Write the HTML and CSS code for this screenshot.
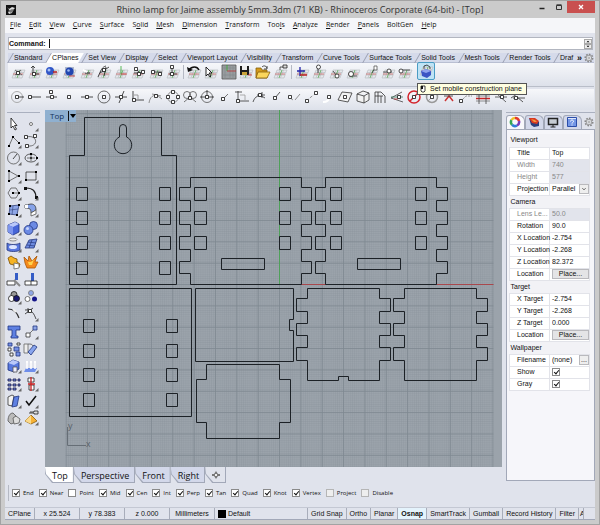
FILE: index.html
```html
<!DOCTYPE html>
<html lang="en">

<head>
  <meta charset="UTF-8">
  <meta name="viewport" content="width=device-width, initial-scale=1.0">
  <title>Rhino lamp for Jaime assembly 5mm.3dm</title>
  <link rel="stylesheet" href="styles.css">
</head>

<body>
  <!-- shared icon parts -->
  <svg class="defs" width="0" height="0">
    <symbol id="plane" viewBox="0 0 16 16">
      <path d="M5 6h10l-3 8H2z" fill="#e6e8ec" />
      <path d="M2 14l3-8M5 14l3-8M8.500 14l3-8M12 14l3-8M5 6h10M4 8.500h10M3 11h10M2 14h10" stroke="#b4b8be" stroke-width=".6" fill="none" />
      <path d="M3 10h10" stroke="#c66" />
      <path d="M7 14l3-8" stroke="#5a5" stroke-width=".8" />
    </symbol>
    <symbol id="dot" viewBox="0 0 4 4">
      <path d="M.5.5h3v3h-3z" fill="#fff" stroke="#111" />
    </symbol>
    <symbol id="gear" viewBox="0 0 10 10">
      <circle cx="5" cy="5" r="3.800" fill="none" stroke="#888" stroke-width="1.500" stroke-dasharray="1.700 1.200" />
      <circle cx="5" cy="5" r="2.800" fill="#e8eaee" stroke="#888" stroke-width=".8" />
      <circle cx="5" cy="5" r="1" fill="#fff" stroke="#888" stroke-width=".7" />
    </symbol>
    <symbol id="more" viewBox="0 0 16 16">
      <path d="M15.500 12v3.500H12z" fill="#666" />
    </symbol>
  </svg>

  <div class="window">
    <header class="titlebar">
      <svg class="logo" viewBox="0 0 10 10"><path d="M0 0h10v10H0z" fill="#111" /><path d="M1 2l2 2 3-2 3 1-2 2-1 3-3 1-1-2 2-1z" fill="#ddd" /><path d="M2 6l4-2 2 1-3 3z" fill="#777" /></svg>
      <h1>Rhino lamp for Jaime assembly 5mm.3dm (71 KB) - Rhinoceros Corporate (64-bit) - [Top]</h1>
      <div class="controls">
        <button aria-label="Minimize"><svg viewBox="0 0 10 10"><path d="M2.500 6.500h5" stroke="#222" stroke-width="1.500" /></svg></button>
        <button aria-label="Maximize"><svg viewBox="0 0 10 10"><path d="M2.500 3.500h5v4h-5zM2.500 2.800h5" fill="none" stroke="#333" /></svg></button>
        <button class="close" aria-label="Close"><svg viewBox="0 0 10 10"><path d="M3 3l4 4M7 3L3 7" stroke="#fff" stroke-width="1.300" /></svg></button>
      </div>
    </header>

    <div class="client">
      <nav class="menu">
        <a href="#"><u>F</u>ile</a>
        <a href="#"><u>E</u>dit</a>
        <a href="#"><u>V</u>iew</a>
        <a href="#"><u>C</u>urve</a>
        <a href="#"><u>S</u>urface</a>
        <a href="#">S<u>o</u>lid</a>
        <a href="#"><u>M</u>esh</a>
        <a href="#"><u>D</u>imension</a>
        <a href="#"><u>T</u>ransform</a>
        <a href="#">Too<u>l</u>s</a>
        <a href="#"><u>A</u>nalyze</a>
        <a href="#"><u>R</u>ender</a>
        <a href="#"><u>P</u>anels</a>
        <a href="#">BoltGen</a>
        <a href="#"><u>H</u>elp</a>
      </nav>

      <div class="command">
        <label for="cmd">Command:</label>
        <span class="caret"></span>
        <input id="cmd" type="text">
        <div class="spin"><button aria-label="Up"><svg viewBox="0 0 8 4"><path d="M4 1l2 2H2z" /></svg></button><button aria-label="Down"><svg viewBox="0 0 8 4"><path d="M4 3l2-2H2z" /></svg></button></div>
      </div>

      <div class="tabs">
        <button>Standard</button>
        <button class="active">CPlanes</button>
        <button>Set View</button>
        <button>Display</button>
        <button>Select</button>
        <button>Viewport Layout</button>
        <button>Visibility</button>
        <button>Transform</button>
        <button>Curve Tools</button>
        <button>Surface Tools</button>
        <button>Solid Tools</button>
        <button>Mesh Tools</button>
        <button>Render Tools</button>
        <button>Draf</button>
        <b>»</b>
        <svg class="gear"><use href="#gear" /></svg>
      </div>

      <div class="toolbar">
        <svg viewBox="0 0 16 16"><use href="#plane" /><path d="M5 6l7 5M5 11l6-5" stroke="#555" /><use href="#dot" x="6" y="7" width="4" height="4" /></svg>
        <svg viewBox="0 0 16 16"><use href="#plane" /><path d="M6 10V2M4 4l2-2 2 2M6 10h6" fill="none" stroke="#222" /><use href="#dot" x="5" y="8" width="4" height="4" /></svg>
        <svg viewBox="0 0 16 16"><use href="#plane" /><circle cx="6" cy="7" r="4" fill="#3157c8" /><circle cx="5" cy="6" r="1.500" fill="#a9c1f4" /><path d="M9 8h4" stroke="#b22" stroke-width="1.500" /></svg>
        <svg viewBox="0 0 16 16"><use href="#plane" /><path d="M4 3h9v9H4z" fill="#aeb8cc" /><circle cx="8.500" cy="7.500" r="4" fill="#2145b0" /><circle cx="7.500" cy="6.500" r="1.300" fill="#9db8f0" /><path d="M8 12h6" stroke="#b22" /></svg>
        <svg viewBox="0 0 16 16"><use href="#plane" /><path d="M6 9h5" stroke="#555" stroke-width="1.500" /><path d="M4 6l4 2" stroke="#fff" stroke-width="2" /></svg>
        <svg viewBox="0 0 16 16"><use href="#plane" /><path d="M2 13C5 6 6 3 10 2M4 9l9-6M8 12l2-9" fill="none" stroke="#222" /><use href="#dot" x="6" y="4" width="4" height="4" /></svg>
        <svg viewBox="0 0 16 16"><use href="#plane" /><path d="M8 10V2" stroke="#3a3" /><path d="M8 10h6" stroke="#c44" /></svg>
        <svg viewBox="0 0 16 16"><use href="#plane" /><path d="M4 9h7M6 5l4 4" stroke="#333" /><use href="#dot" x="4" y="3" width="4" height="4" /><use href="#dot" x="7" y="8" width="4" height="4" /><use href="#dot" x="11" y="6" width="4" height="4" /></svg>
        <svg viewBox="0 0 16 16"><use href="#plane" /><path d="M4 8h10" stroke="#333" /><use href="#dot" x="3" y="6" width="4" height="4" /><use href="#dot" x="10" y="8" width="4" height="4" /></svg>
        <svg viewBox="0 0 16 16"><use href="#plane" /><path d="M7 3v7M4 10h8" stroke="#333" /><use href="#dot" x="5" y="1" width="4" height="4" /><use href="#dot" x="5" y="8" width="4" height="4" /></svg>
        <i class="sep"></i>
        <svg viewBox="0 0 16 16"><use href="#plane" /><path d="M3 6c3-4 8-4 10 0" fill="none" stroke="#111" stroke-width="1.500" /><path d="M1 3l1 5 5-2z" fill="#111" /></svg>
        <svg viewBox="0 0 16 16"><use href="#plane" /><path d="M3 3v9l2-2 2 3 1-1-2-3h3z" fill="#fff" stroke="#111" stroke-width=".9" /></svg>
        <svg viewBox="0 0 16 16"><path d="M1 1h14v14H1z" fill="#999da0" stroke="#555" /><path d="M1 4h14M1 11h14M4 1v14M12 1v14M9 1v14" stroke="#85898d" stroke-width=".7" /><path d="M6 1v6" stroke="#3a3" /><path d="M6 7h9" stroke="#b33" /></svg>
        <svg viewBox="0 0 16 16"><use href="#plane" /><path d="M2 2h9v9H2z" fill="#1c1c1c" /><path d="M4 2h5v4H4z" fill="#eee" /><path d="M4 8h5v3H4z" fill="#caa43a" /><path d="M10 11h4" stroke="#c33" /></svg>
        <svg viewBox="0 0 16 16"><path d="M1 4h5l1 2h5v8H1z" fill="#d49a1c" stroke="#86600c" stroke-width=".8" /><path d="M3 8h12l-3 6H1z" fill="#fbd65c" stroke="#86600c" stroke-width=".8" /><path d="M7 3c2-2 4-1 5 1M12 2v3H9" fill="none" stroke="#222" /></svg>
        <svg viewBox="0 0 16 16"><use href="#plane" /><path d="M8 6V3h4" fill="none" stroke="#333" /><path d="M11 1h4v3h-4z" fill="#ddd" stroke="#222" /></svg>
        <i class="sep"></i>
        <svg viewBox="0 0 16 16"><use href="#plane" /><path d="M6 3v9M3 7h8" stroke="#22a" stroke-width="1.300" /><path d="M6 11h7" stroke="#b22" stroke-width="1.500" /></svg>
        <svg viewBox="0 0 16 16"><use href="#plane" /><path d="M7 9V4" stroke="#222" /><circle cx="7.500" cy="3" r="2" fill="#fff" stroke="#222" /></svg>
        <svg viewBox="0 0 16 16"><use href="#plane" /><path d="M5 7l4 5" stroke="#333" /><circle cx="9" cy="12" r="2" fill="#fff" stroke="#222" /></svg>
        <svg viewBox="0 0 16 16"><use href="#plane" /><path d="M4 12h8" stroke="#333" /><circle cx="6" cy="10" r="2.500" fill="#fff" stroke="#222" /></svg>
        <svg viewBox="0 0 16 16"><use href="#plane" /><path d="M9 9l3-5" stroke="#333" /><path d="M11 2h3v4h-3z" fill="#fff" stroke="#555" /></svg>
        <svg viewBox="0 0 16 16"><use href="#plane" /><path d="M3 8h9" stroke="#333" /><circle cx="9" cy="7" r="2" fill="#fff" stroke="#222" /></svg>
        <svg viewBox="0 0 16 16"><use href="#plane" /><path d="M4 6h9" stroke="#333" /><circle cx="4" cy="7" r="2" fill="#fff" stroke="#222" /></svg>
        <div class="hot">
          <button aria-label="Set mobile construction plane"><svg viewBox="0 0 16 16"><use href="#plane" y="-2" /><path d="M3 8l5-2 5 2v4l-4 3-5-2z" fill="#3b55c4" /><path d="M3 8l5-2 5 2-5 2z" fill="#8fa4ee" /><path d="M6 6V3l3-1 3 2v2" fill="none" stroke="#222" /></svg></button>
          <div class="tooltip"><svg viewBox="0 0 6 8"><path d="M1 1h4v5l-1 1H2L1 6z" fill="#fff" stroke="#111" /><path d="M1 1h2v3H1z" fill="#111" /></svg>Set mobile construction plane</div>
        </div>
      </div>

      <div class="toolbar osnap-bar">
        <svg viewBox="0 0 16 16"><circle cx="7" cy="8" r="5.500" fill="none" stroke="#999" /><path d="M8 8h6" stroke="#222" /><use href="#dot" x="5" y="6" width="4" height="4" /></svg>
        <svg viewBox="0 0 16 16"><path d="M4 8h10" stroke="#222" /><use href="#dot" x="1" y="6" width="4" height="4" /></svg>
        <svg viewBox="0 0 16 16"><path d="M2 8h11" stroke="#222" /><use href="#dot" x="6" y="6" width="4" height="4" /><use href="#dot" x="5" y="1" width="4" height="4" /></svg>
        <svg viewBox="0 0 16 16"><use href="#dot" x="6" y="6" width="4" height="4" /></svg>
        <svg viewBox="0 0 16 16"><path d="M2 8h12" stroke="#222" /><use href="#dot" x="6" y="6" width="4" height="4" /></svg>
        <svg viewBox="0 0 16 16"><circle cx="8" cy="8" r="6" fill="none" stroke="#444" /><use href="#dot" x="6" y="6" width="4" height="4" /></svg>
        <svg viewBox="0 0 16 16"><path d="M2 8h12M11 2L6 14" stroke="#222" /><use href="#dot" x="6" y="6" width="4" height="4" /></svg>
        <svg viewBox="0 0 16 16"><path d="M3 2v9h11" fill="none" stroke="#222" /><path d="M4 6h4v4" fill="none" stroke="#888" /><use href="#dot" x="2" y="9" width="4" height="4" /></svg>
        <svg viewBox="0 0 16 16"><path d="M1 14c1-6 4-9 9-7l4 3M4 5l9 2" fill="none" stroke="#777" /><use href="#dot" x="6" y="5" width="4" height="4" /></svg>
        <svg viewBox="0 0 16 16"><circle cx="8" cy="8" r="5.500" fill="none" stroke="#777" /><use href="#dot" x="6" y="1" width="4" height="4" /><use href="#dot" x="6" y="11" width="4" height="4" /><use href="#dot" x="1" y="6" width="4" height="4" /><use href="#dot" x="11" y="6" width="4" height="4" /></svg>
        <svg viewBox="0 0 16 16"><circle cx="5" cy="6" r="3.500" fill="none" stroke="#555" /><circle cx="11" cy="6" r="3.500" fill="none" stroke="#555" /><path d="M2 13l6-5 6 5" fill="none" stroke="#555" /><use href="#dot" x="6" y="7" width="4" height="4" /></svg>
        <svg viewBox="0 0 16 16"><circle cx="8" cy="8" r="5.500" fill="none" stroke="#555" /><path d="M8 1v7M1 8h14" stroke="#222" /><use href="#dot" x="6" y="6" width="4" height="4" /></svg>
        <svg viewBox="0 0 16 16"><path d="M6 10l5-5" stroke="#555" /><use href="#dot" x="4" y="8" width="4" height="4" /></svg>
        <svg viewBox="0 0 16 16"><path d="M4 2v11M1 3h7M4 12h11" stroke="#333" /><path d="M6 6h5v5" fill="none" stroke="#999" /><use href="#dot" x="2" y="10" width="4" height="4" /></svg>
        <svg viewBox="0 0 16 16"><path d="M2 13c2-6 6-8 12-4M6 6h8M11 3v6" fill="none" stroke="#333" /><use href="#dot" x="7" y="4" width="4" height="4" /></svg>
        <svg viewBox="0 0 16 16"><path d="M7 9l5-6" stroke="#333" /><use href="#dot" x="5" y="7" width="4" height="4" /></svg>
        <svg viewBox="0 0 16 16"><path d="M3 8l4 3M9 11l5-6" stroke="#777" /><use href="#dot" x="2" y="6" width="4" height="4" /></svg>
        <svg viewBox="0 0 16 16"><path d="M3 12l10-8" stroke="#777" stroke-dasharray="3 2" /><use href="#dot" x="2" y="10" width="4" height="4" /><use href="#dot" x="11" y="2" width="4" height="4" /></svg>
        <svg viewBox="0 0 16 16"><path d="M3 13c4 0 6-1 6-5" fill="none" stroke="#fff" stroke-width="2" /><use href="#dot" x="7" y="6" width="4" height="4" /></svg>
        <svg viewBox="0 0 16 16"><path d="M5 3l10 1-4 9L1 11z" fill="#f2f2f2" stroke="#333" /><use href="#dot" x="6" y="6" width="4" height="4" /></svg>
        <svg viewBox="0 0 16 16"><path d="M2 5l6-3 6 2v7l-5 3-7-2zM2 5l7 2 5-3M9 7v7" fill="#f2f2f2" stroke="#333" /></svg>
        <svg viewBox="0 0 16 16"><path d="M3 14V3h6l4 4v7M3 7h8M6 3v11M9 7v7" fill="none" stroke="#333" /></svg>
        <svg viewBox="0 0 16 16"><path d="M13 3L2 9l12 4" fill="none" stroke="#444" /><path d="M2 8h12" stroke="#3a7a5a" /><path d="M5 10h4" stroke="#c33" /><use href="#dot" x="8" y="6" width="4" height="4" /></svg>
        <svg viewBox="0 0 16 16"><circle cx="8" cy="8" r="6" fill="none" stroke="#d3232b" stroke-width="1.500" /><path d="M4 12l8-8" stroke="#d3232b" stroke-width="1.500" /><use href="#dot" x="6" y="6" width="4" height="4" /></svg>
        <svg viewBox="0 0 16 16"><circle cx="8" cy="8" r="5.500" fill="none" stroke="#999" stroke-width="1.500" /><path d="M4 12l8-8" stroke="#999" /><use href="#dot" x="6" y="6" width="4" height="4" /></svg>
        <svg viewBox="0 0 16 16"><path d="M4 12l4-5 4 5" fill="none" stroke="#c33" stroke-width="1.500" /><path d="M3 7h9" stroke="#333" /></svg>
        <svg viewBox="0 0 16 16"><path d="M3 12l5-5h6" fill="none" stroke="#777" stroke-dasharray="2 1" /><use href="#dot" x="1" y="10" width="4" height="4" /></svg>
        <svg viewBox="0 0 16 16"><path d="M1 7h14M1 12h14" stroke="#777" /><path d="M1 9.500h14" stroke="#c22" stroke-width="1.500" /><path d="M4 5v10M11 5v10" stroke="#444" /></svg>
        <svg viewBox="0 0 16 16"><path d="M2 8h12M4 5l9 8" stroke="#444" /><use href="#dot" x="7" y="6" width="4" height="4" /></svg>
        <svg viewBox="0 0 16 16"><path d="M1 9l9-6h4v3M3 9h12M7 8l6 5" fill="none" stroke="#333" /><use href="#dot" x="4" y="7" width="4" height="4" /></svg>
      </div>

      <main class="work">
        <aside class="tools">
          <svg viewBox="0 0 16 16"><path d="M5 2v10l2-2 2 4 1.500-.8-2-3.700H11z" fill="#fff" stroke="#111" /></svg>
          <svg viewBox="0 0 16 16"><circle cx="8" cy="8" r="1.500" fill="#fff" stroke="#555" /><use href="#more" /></svg>
          <svg viewBox="0 0 16 16"><path d="M3 13L7 4l6 6" fill="none" stroke="#555" /><path d="M2 12h2v2H2zM6 3h2v2H6zM12 9h2v2h-2z" /><use href="#more" /></svg>
          <svg viewBox="0 0 16 16"><path d="M3 4c12-3 13 10 2 9" fill="none" stroke="#555" /><use href="#dot" x="1" y="2" width="4" height="4" /><use href="#dot" x="10" y="1" width="4" height="4" /><use href="#dot" x="2" y="11" width="4" height="4" /><use href="#more" /></svg>
          <svg viewBox="0 0 16 16"><circle cx="7.500" cy="8" r="6" fill="none" stroke="#555" /><path d="M7 9l4-5" stroke="#222" /><use href="#more" /></svg>
          <svg viewBox="0 0 16 16"><ellipse cx="8" cy="8" rx="6" ry="4" fill="none" stroke="#333" /><path d="M7 7h2v2H7zM7 3h2v2H7zM13 7h2v2h-2z" /><path d="M8 5v6M4 8h8" stroke="#555" /><use href="#more" /></svg>
          <svg viewBox="0 0 16 16"><path d="M3 3v10M3 3l9 5-9 5" fill="none" stroke="#555" /><path d="M2 2h2v2H2zM2 12h2v2H2zM12 7h2v2h-2z" /><use href="#more" /></svg>
          <svg viewBox="0 0 16 16"><path d="M3 4h10v8H3z" fill="none" stroke="#333" /><path d="M2 11h2v2H2zM12 3h2v2h-2z" /><use href="#more" /></svg>
          <svg viewBox="0 0 16 16"><path d="M5 3h5l3 5-3 5H5L2 8zM7 8h6" fill="none" stroke="#555" /><path d="M6 7h2v2H6zM12 7h2v2h-2z" /><use href="#more" /></svg>
          <svg viewBox="0 0 16 16"><path d="M3 3c7 0 10 3 10 10" fill="none" stroke="#222" stroke-width="1.200" /><path d="M1 2h3v3H1zM12 11h3v3h-3z" fill="#111" /><use href="#more" /></svg>
          <svg viewBox="0 0 16 16"><path d="M4 4l9-1-2 10-8-1z" fill="#8ea6e6" stroke="#33437c" /><path d="M7 4l-1 9M4 8l8-1" stroke="#33437c" stroke-width=".6" /><path d="M3 3h2v2H3zM12 2h2v2h-2zM10 12h2v2h-2zM2 11h2v2H2z" /><use href="#more" /></svg>
          <svg viewBox="0 0 16 16"><path d="M2 3l6-1c4 0 5 3 5 6l-5 3c0-4-1-5-6-5z" fill="#86a2e8" stroke="#333" /><path d="M2 3l3-.5V6L2 6z" fill="#fff" /><path d="M8 11l5-3v4l-5 2z" fill="#fff" stroke="#555" /><use href="#more" /></svg>
          <svg viewBox="0 0 16 16"><path d="M2 5l7-3 4 2v8l-6 3-5-3z" fill="#4665d8" stroke="#203383" /><path d="M2 5l7-3 4 2-6 3z" fill="#b9c8fa" /><path d="M2 5l5 2v8l-5-3z" fill="#7c95ee" /><use href="#more" /></svg>
          <svg viewBox="0 0 16 16"><circle cx="10.500" cy="5.500" r="4" fill="#6c8ae4" stroke="#22357f" /><circle cx="5.500" cy="10" r="4.500" fill="#6c8ae4" stroke="#22357f" /><circle cx="4.500" cy="8.500" r="1.500" fill="#c9d6fb" /><use href="#more" /></svg>
          <svg viewBox="0 0 16 16"><ellipse cx="7" cy="2.500" rx="4" ry="1.500" fill="#eee" stroke="#777" /><path d="M1 6c2 2 10 2 13 0v7c-3 2-10 2-13 0z" fill="#5877de" stroke="#26377b" /><ellipse cx="7" cy="10" rx="4" ry="2" fill="#dce5ff" /><use href="#more" /></svg>
          <svg viewBox="0 0 16 16"><path d="M2 11l4-8 8-1-3 9z" fill="#6f8de2" stroke="#26377b" /><path d="M5 5l8 1M4 8l8 1M9 3l-3 8" stroke="#26377b" stroke-width=".7" /><use href="#more" /></svg>
          <svg viewBox="0 0 16 16"><path d="M2 4l3-2 3 2 3 1v3l3 2-1 3-4 1-1-3-4-1z" fill="#f5b324" stroke="#7a4e05" /><path d="M8 9l5 1v4l-5 1z" fill="#fff" stroke="#666" /></svg>
          <svg viewBox="0 0 16 16"><path d="M1 3l4 4 1-5 3 5 5-5-2 6 3 0-3 6H4L2 9z" fill="#f58a1c" stroke="#a95606" stroke-width=".8" /><path d="M5 8l3 0 3-3-2 6H6z" fill="#ffd34d" /></svg>
          <svg viewBox="0 0 16 16"><path d="M9 1h3v7H9z" fill="#345cc6" /><path d="M1 9h8v4H1z" fill="#fff" stroke="#222" /><path d="M8 8l6 6" stroke="#888" stroke-width="2" /></svg>
          <svg viewBox="0 0 16 16"><path d="M8 1h3v8H8z" fill="#345cc6" /><path d="M2 9h12v4H2z" fill="#fff" stroke="#222" /><path d="M8 9v4" stroke="#222" /></svg>
          <svg viewBox="0 0 16 16"><circle cx="8" cy="5.500" r="3" fill="#999" stroke="#111" /><circle cx="5.500" cy="9.500" r="3" fill="#fff" stroke="#111" /><circle cx="10.500" cy="9.500" r="3" fill="#191970" stroke="#111" /><use href="#more" /></svg>
          <svg viewBox="0 0 16 16"><circle cx="8" cy="4" r="2.500" fill="#8ea6e6" stroke="#777" /><circle cx="4.500" cy="10" r="2.500" fill="#fff" stroke="#555" /><circle cx="11.500" cy="10" r="2.500" fill="#15158a" /></svg>
          <svg viewBox="0 0 16 16"><path d="M2 3c6 0 9 3 11 9" fill="none" stroke="#333" stroke-width="1.200" /><path d="M7 3l3 3" stroke="#eee" stroke-width="2" /></svg>
          <svg viewBox="0 0 16 16"><path d="M2 4c7-1 9 4 11 9M2 8l8-6M5 2v5" fill="none" stroke="#222" /><use href="#dot" x="5" y="3" width="4" height="4" /><use href="#more" /></svg>
          <svg viewBox="0 0 16 16"><path d="M2 2h12v4h-4v6h2v2H5v-2h1V6H2z" fill="#5e80e2" stroke="#223680" /></svg>
          <svg viewBox="0 0 16 16"><path d="M5 11l6-6" stroke="#555" /><path d="M10 2h4v4h-4z" fill="#8ea6e6" stroke="#223680" /><path d="M3 9h4v4H3z" fill="#fff" stroke="#333" /><use href="#more" /></svg>
          <svg viewBox="0 0 16 16"><path d="M2 2h4v3H2zM8 6h5v4H8zM10 11h4v4h-4z" fill="#7792e5" stroke="#223680" /><path d="M2 7h3v3H2zM4 12h3v3H4zM11 2h3v2h-3z" fill="#fff" stroke="#222" /></svg>
          <svg viewBox="0 0 16 16"><path d="M1 3h4v9H1z" fill="#eee" stroke="#666" /><path d="M5 11l6-7 3 2-6 8z" fill="#89a5ee" stroke="#223680" /><path d="M5 3c3 0 4 0 5 2" fill="none" stroke="#555" /></svg>
          <svg viewBox="0 0 16 16"><path d="M2 5l5-3 6 2v7l-5 3-6-2z" fill="#5878de" stroke="#223680" /><path d="M2 5l5-3 6 2-5 3z" fill="#b9c8fa" /><path d="M7 9h4v5H7z" fill="#eef" stroke="#555" /><use href="#more" /></svg>
          <svg viewBox="0 0 16 16"><path d="M3 10h11l-2 4H1z" fill="#6f8eea" /><path d="M4 11V3M8 11V3M12 11V3M3 4h2M7 4h2M11 4h2" stroke="#fff" stroke-width="1.500" /><use href="#more" /></svg>
          <svg viewBox="0 0 16 16"><path d="M2 3h3v2H2zM7 3h3v2H7zM12 3h2v2h-2zM2 8h3v2H2zM7 8h3v2H7zM12 8h2v2h-2zM2 12h3v2H2zM7 12h3v2H7z" fill="#7792e5" stroke="#111144" /><use href="#more" /></svg>
          <svg viewBox="0 0 16 16"><path d="M5 2h6v4H5zM6 9h5v5H6z" fill="#fff" stroke="#222" /><path d="M8 1v14M5 8h7" stroke="#c22" stroke-width="1.300" /><use href="#more" /></svg>
          <svg viewBox="0 0 16 16"><path d="M2 4l4-2 2 1-2 10-4-1z" fill="#f3f3f3" stroke="#333" /><path d="M8 4l5-1-2 10-5 1z" fill="#5e80e2" stroke="#223680" /><use href="#more" /></svg>
          <svg viewBox="0 0 16 16"><path d="M3 8l3 4 7-9" fill="none" stroke="#111" stroke-width="1.500" /><use href="#more" /></svg>
          <svg viewBox="0 0 16 16"><path d="M2 11c0-5 2-8 5-8l3 3v6l-5 2z" fill="#bbb" stroke="#555" /><path d="M7 8l3-2 4 3-1 4-5 1z" fill="#ddd" stroke="#555" /><use href="#more" /></svg>
          <svg viewBox="0 0 16 16"><path d="M2 11l6-6 6 6-6 3z" fill="#f7b236" stroke="#8a5a08" /><path d="M8 5v9L2 11z" fill="#fbd98a" /><path d="M7 4V2h4V1h4v3h-4V3H8" fill="#ddd" stroke="#222" /><use href="#more" /></svg>
        </aside>

        <section class="center">
          <div class="viewport">
            <div class="view-title"><span>Top</span><button aria-label="Viewport menu"><svg viewBox="0 0 6 6"><path d="M0 1h6L3 5z" /></svg></button></div>
            <svg class="drawing" viewBox="45 110 457 357">
              <defs>
                <pattern id="minor" x="279.500" y="284.500" width="2.135" height="2.135" patternUnits="userSpaceOnUse">
                  <path d="M0 0h2.135M0 0v2.135" stroke="#89929a" stroke-width=".5" fill="none" />
                </pattern>
                <pattern id="major" x="279" y="284" width="21.350" height="21.350" patternUnits="userSpaceOnUse">
                  <path d="M0 .5h21.350M.5 0v21.350" stroke="#7e8890" stroke-width=".8" fill="none" />
                </pattern>
              </defs>
              <path d="M65.500 110h428v357h-428z" fill="url(#minor)" />
              <path d="M65.500 110h428v357h-428z" fill="url(#major)" />
              <path d="M279.500 110v174" stroke="#4fa05a" />
              <path d="M279.500 284.500h214" stroke="#a8474c" />
              <g class="curves">
                <!-- back plate with keyhole -->
                <path d="M69.500 155.500h15v-38h77v38h15v129h-107z" />
                <path d="M119.500 137v-9a3.500 3.500 0 0 1 7 0v9a8.700 8.700 0 1 1-7 0z" />
                <path d="M76.500 187.500h11v13h-11zM76.500 211.500h11v13h-11zM76.500 236.500h11v13h-11zM76.500 261.500h11v13h-11zM159.500 187.500h11v13h-11zM159.500 211.500h11v13h-11zM159.500 236.500h11v13h-11zM159.500 261.500h11v13h-11z" />
                <!-- long sides -->
                <path d="M190.500 177.500h111v10h10v13h-10v11h10v13h-10v12h10v13h-10v12h10v12h-10v11h-111v-11h-11v-12h11v-12h-11v-13h11v-12h-11v-13h11v-11h-11v-13h11z" />
                <path d="M194.500 187.500h12v13h-12zM194.500 211.500h12v13h-12zM194.500 236.500h12v13h-12zM279.500 187.500h11v13h-11zM279.500 211.500h11v13h-11zM279.500 236.500h11v13h-11zM221.500 258.500h43v11h-43z" />
                <path d="M325.500 177.500h111v10h11v13h-11v11h11v13h-11v12h11v13h-11v12h11v12h-11v11h-111v-11h-10v-12h10v-12h-10v-13h10v-12h-10v-13h10v-11h-10v-13h10z" />
                <path d="M330.500 187.500h11v13h-11zM330.500 211.500h11v13h-11zM330.500 236.500h11v13h-11zM415.500 187.500h11v13h-11zM415.500 211.500h11v13h-11zM415.500 236.500h11v13h-11zM357.500 258.500h43v11h-43z" />
                <!-- front plate -->
                <path d="M69.500 288.500h122v128h-122z" />
                <path d="M83.500 319.500h11v13h-11zM83.500 344.500h11v13h-11zM83.500 368.500h11v13h-11zM83.500 393.500h11v13h-11zM166.500 319.500h11v13h-11zM166.500 344.500h11v13h-11zM166.500 368.500h11v13h-11zM166.500 393.500h11v13h-11z" />
                <path d="M195.500 288.500h98v31h-4v11h4v31h-98z" />
                <path d="M206.500 364.500h73v15h11v43h-11v16h-73v-16h-10v-43h10z" />
                <!-- short sides -->
                <path d="M307.500 288.500h72v10h11v13h-11v12h11v12h-11v12h11v13h-11v20h-31v-4h-10v4h-31v-20h-11v-13h11v-12h-11v-12h11v-12h-11v-13h11z" />
                <path d="M404.500 288.500h72v10h11v13h-11v12h11v12h-11v12h11v13h-11v20h-72v-20h-11v-13h11v-12h-11v-12h11v-12h-11v-13h11z" />
              </g>
              <path d="M67.500 427v18.500H86" fill="none" stroke="#666e76" />
              <text x="68" y="429">y</text>
              <text x="86" y="447">x</text>
            </svg>
          </div>
          <div class="view-tabs">
            <button class="active">Top</button>
            <button>Perspective</button>
            <button>Front</button>
            <button>Right</button>
            <button class="add" aria-label="New viewport"><svg viewBox="0 0 8 8"><path d="M4 0l2 3h2v2H6L4 8 2 5H0V3h2z" fill="#777" /><path d="M3 3h2v2H3z" fill="#eee" /></svg></button>
          </div>
        </section>

        <aside class="panel">
          <div class="panel-tabs">
            <button class="active" aria-label="Properties"><svg viewBox="0 0 12 12"><g fill="none" stroke-width="2.500"><path d="M6 2a4 4 0 0 1 4 3" stroke="#e23a2e" /><path d="M10 5a4 4 0 0 1-2 4.500" stroke="#7a3ab8" /><path d="M8 9.500A4 4 0 0 1 3 8.700" stroke="#2f7fd8" /><path d="M3 8.700A4 4 0 0 1 2.500 4" stroke="#35a853" /><path d="M2.500 4A4 4 0 0 1 6 2" stroke="#efc12a" /></g></svg></button>
            <button aria-label="Layers"><svg viewBox="0 0 12 12"><path d="M1 2l6 1 4 3v4L6 11 3 9z" fill="#2b3d7c" /><path d="M1 2l6 0 4 3-2 3-5-1z" fill="#d9381f" /><path d="M3 3l4 1 2 2-3 0z" fill="#f3943c" /></svg></button>
            <button aria-label="Display"><svg viewBox="0 0 12 12"><path d="M1.500 2.500h9v6h-9z" fill="#c6cbd2" stroke="#222" stroke-width="1.500" /><path d="M6 9v2M3.500 11h5" stroke="#222" /></svg></button>
            <button aria-label="Help"><svg viewBox="0 0 12 12"><path d="M1.500 1.500h9v9h-9z" fill="#7396e6" stroke="#2b4da8" /><path d="M2 2.500h8" stroke="#dfe7fb" /><path d="M4.500 5.500c0-2 3-2 3 0 0 1-1.500 1-1.500 2M6 8.500v1" fill="none" stroke="#fff" /></svg></button>
            <svg class="gear"><use href="#gear" /></svg>
          </div>
          <div class="panel-body">
            <table>
              <tr><th colspan="2">Viewport</th></tr>
              <tr><td><label for="title">Title</label></td><td><input id="title" value="Top"></td></tr>
              <tr class="off"><td><label for="width">Width</label></td><td><input id="width" value="740" disabled></td></tr>
              <tr class="off"><td><label for="height">Height</label></td><td><input id="height" value="577" disabled></td></tr>
              <tr><td><label for="proj">Projection</label></td><td><div class="pick"><select id="proj"><option>Parallel</option><option>Perspective</option></select><svg viewBox="0 0 10 10"><path d="M3 4l2 2 2-2" fill="none" stroke="#333" /></svg></div></td></tr>
              <tr><th colspan="2">Camera</th></tr>
              <tr class="off"><td><label for="lens">Lens Le...</label></td><td><input id="lens" value="50.0" disabled></td></tr>
              <tr><td><label for="rot">Rotation</label></td><td><input id="rot" value="90.0"></td></tr>
              <tr><td><label for="xl">X Location</label></td><td><input id="xl" value="-2.754"></td></tr>
              <tr><td><label for="yl">Y Location</label></td><td><input id="yl" value="-2.268"></td></tr>
              <tr><td><label for="zl">Z Location</label></td><td><input id="zl" value="82.372"></td></tr>
              <tr><td><label for="cam">Location</label></td><td><button id="cam">Place...</button></td></tr>
              <tr><th colspan="2">Target</th></tr>
              <tr><td><label for="xt">X Target</label></td><td><input id="xt" value="-2.754"></td></tr>
              <tr><td><label for="yt">Y Target</label></td><td><input id="yt" value="-2.268"></td></tr>
              <tr><td><label for="zt">Z Target</label></td><td><input id="zt" value="0.000"></td></tr>
              <tr><td><label for="tgt">Location</label></td><td><button id="tgt">Place...</button></td></tr>
              <tr><th colspan="2">Wallpaper</th></tr>
              <tr><td><label for="file">Filename</label></td><td><div class="pick"><input id="file" value="(none)"><button aria-label="Browse">...</button></div></td></tr>
              <tr><td><label for="show">Show</label></td><td><input type="checkbox" id="show" checked></td></tr>
              <tr><td><label for="gray">Gray</label></td><td><input type="checkbox" id="gray" checked></td></tr>
            </table>
          </div>
        </aside>
      </main>

      <div class="osnaps">
        <label><input type="checkbox" checked>End</label>
        <label><input type="checkbox" checked>Near</label>
        <label><input type="checkbox">Point</label>
        <label><input type="checkbox" checked>Mid</label>
        <label><input type="checkbox" checked>Cen</label>
        <label><input type="checkbox" checked>Int</label>
        <label><input type="checkbox" checked>Perp</label>
        <label><input type="checkbox" checked>Tan</label>
        <label><input type="checkbox" checked>Quad</label>
        <label><input type="checkbox" checked>Knot</label>
        <label><input type="checkbox" checked>Vertex</label>
        <label><input type="checkbox" class="dim">Project</label>
        <label><input type="checkbox" class="dim">Disable</label>
      </div>

      <footer class="status">
        <button class="cplane">CPlane</button>
        <span class="coord">x 25.524</span>
        <span class="coord">y 78.383</span>
        <span class="coord">z 0.000</span>
        <span class="coord">Millimeters</span>
        <button class="layer"><i></i>Default</button>
        <button>Grid Snap</button>
        <button>Ortho</button>
        <button>Planar</button>
        <button class="on">Osnap</button>
        <button>SmartTrack</button>
        <button>Gumball</button>
        <button>Record History</button>
        <button>Filter</button>
        <span class="cut">A</span>
      </footer>
    </div>
  </div>
</body>

</html>
```

FILE: styles.css
```css
* {
  margin: 0;
  padding: 0;
  box-sizing: border-box;
}

body {
  font: 7px/10px "Liberation Sans", Arial, sans-serif;
  color: #111;
}

button,
input,
select {
  font: inherit;
  color: inherit;
  border: 0;
  border-radius: 0;
  background: none;
  min-width: 0;
}

a {
  color: inherit;
  text-decoration: none;
}

svg {
  display: block;
}

.defs {
  position: absolute;
}

.window {
  display: flex;
  flex-direction: column;
  min-height: 100vh;
  padding: 0 4px 4px;
  border: 1px solid #a3a3a3;
  background: #cbcbcb;
}

.client {
  flex: 1;
  display: flex;
  flex-direction: column;
  background: #e0e3ec;
}

/* title bar */
.titlebar {
  display: flex;
  align-items: center;
  height: 17px;
}

.logo {
  width: 10px;
  height: 10px;
  margin-left: 1px;
}

.titlebar h1 {
  flex: 1;
  padding-left: 51px;
  font: 9px/16px "Open Sans", sans-serif;
  color: #333;
  text-align: center;
  white-space: nowrap;
}

.controls {
  display: flex;
  align-self: flex-start;
}

.controls button {
  display: flex;
  align-items: center;
  justify-content: center;
  width: 17px;
  height: 12px;
}

.controls svg {
  width: 10px;
  height: 10px;
}

.controls .close {
  width: 28px;
  background: #c9504f;
}

/* menu */
.menu {
  display: flex;
  gap: 8px;
  height: 15px;
  padding-left: 5px;
  background: #f5f6f9;
  font: 7px/14px "Open Sans", sans-serif;
}

/* command line */
.command {
  display: flex;
  align-items: center;
  height: 13px;
  margin: 4px 2px 0 3px;
  border: 1px solid #b2b6c0;
  background: #fff;
}

.command label {
  font-weight: bold;
}

.caret {
  width: 1px;
  height: 9px;
  margin-left: 3px;
  background: #111;
}

.command input {
  flex: 1;
  outline: 0;
}

.spin {
  display: flex;
  flex-direction: column;
}

.spin button {
  display: block;
  width: 8px;
  height: 5px;
  border: 1px solid #aaa;
  background: #eee;
}

/* toolbar tabs */
.tabs {
  display: flex;
  align-items: center;
  height: 10px;
  margin: 3px 1px 0 3px;
  border-bottom: 1px solid #b9bfd2;
  background: #d5daea;
}

.tabs button {
  position: relative;
  z-index: 0;
  height: 10px;
  padding: 0 4px 0 6px;
  line-height: 9px;
  white-space: nowrap;
}

.tabs button::before {
  content: "";
  position: absolute;
  z-index: -1;
  inset: 0 1px 0 2px;
  border-left: 1px solid #9aa0b2;
  transform: skewX(-30deg);
}

.tabs .active::before {
  background: #fff;
}

.tabs b {
  margin-left: auto;
  font-size: 9px;
}

.gear {
  width: 10px;
  height: 10px;
  margin-left: 2px;
}

/* icon bars */
.toolbar {
  display: flex;
  align-items: center;
  height: 24px;
  padding: 0 0 5px 2px;
  margin: 0 1px 0 3px;
  border-bottom: 1px solid #b9bec9;
  background: linear-gradient(#f6f7fa, #dde1ea);
}

.toolbar svg,
.tools svg {
  stroke-width: .8;
}

.toolbar > svg {
  width: 16px;
  height: 16px;
  margin-right: 1px;
}

.toolbar > svg:nth-of-type(4n) {
  margin-right: 2px;
}

.sep {
  width: 1px;
  height: 14px;
  margin: 0 2px 0 1px;
  background: #b5b9c4;
}

.hot {
  position: relative;
  margin-left: 3px;
}

.hot button {
  width: 18px;
  height: 18px;
  border: 1px solid #4a9cc4;
  border-radius: 2px;
  background: #bfe3f5;
}

.hot button svg {
  width: 16px;
  height: 16px;
}

.tooltip {
  position: absolute;
  z-index: 2;
  top: 21px;
  left: 0;
  display: flex;
  align-items: center;
  gap: 4px;
  padding: 0 4px 0 2px;
  border: 1px solid #555;
  background: #ffffe1;
  white-space: nowrap;
}

.tooltip svg {
  width: 6px;
  height: 8px;
}

.osnap-bar {
  height: 21px;
  margin-top: 2px;
  border: 0;
}

/* work area */
.work {
  flex: 1;
  display: flex;
}

.tools {
  display: grid;
  grid-template-columns: 17px 17px;
  align-content: start;
  width: 40px;
  padding: 2px 0 0 1px;
}

.tools::before {
  content: "";
  grid-column: span 2;
  height: 1px;
  margin: 0 0 3px 1px;
  background: #aab0bf;
}

.tools svg {
  width: 16px;
  height: 16px;
  margin-bottom: 1px;
}

.tools svg:nth-child(6n) {
  margin-bottom: 2px;
}

.center {
  flex: 1;
  display: flex;
  flex-direction: column;
  min-width: 0;
}

.viewport {
  position: relative;
  flex: 1;
  background: #9ba3ab;
}

.drawing {
  position: absolute;
  width: 100%;
  height: 100%;
}

.drawing text {
  font: 9px "Liberation Sans", sans-serif;
  fill: #5c646c;
}

.curves {
  fill: none;
  stroke: #1c2126;
}

.view-title {
  position: absolute;
  z-index: 1;
  display: flex;
  align-items: center;
  height: 12px;
  padding-left: 5px;
  background: #8fb0d0;
  font: 8px/12px "Open Sans", sans-serif;
  color: #14305c;
}

.view-title button {
  width: 8px;
  height: 10px;
  margin-left: 4px;
  padding-left: 1px;
  border-left: 1px solid #111;
}

.view-title svg {
  width: 6px;
  height: 6px;
}

.view-tabs {
  display: flex;
  height: 16px;
}

.view-tabs button {
  position: relative;
  z-index: 0;
  padding: 0 6px 0 7px;
  background: #a2a8b8;
  font: 9px/15px "Open Sans", sans-serif;
  clip-path: polygon(0 0, 100% 0, 100% 100%, 7px 100%, 0 7px);
}

.view-tabs button::before {
  content: "";
  position: absolute;
  z-index: -1;
  inset: 0 1px 1px 0;
  background: #d3d8ea;
  clip-path: polygon(0 0, 100% 0, 100% 100%, 8px 100%, 1px 7px);
}

.view-tabs .active::before {
  background: #fff;
}

.view-tabs .add::before {
  background: #e0e3ec;
}

.view-tabs svg {
  width: 8px;
  height: 8px;
}

/* properties panel */
.panel {
  display: flex;
  flex-direction: column;
  width: 89px;
  margin: 0 0 2px 4px;
  padding-top: 2px;
}

.panel-tabs {
  display: flex;
  align-items: center;
  height: 17px;
  padding-top: 2px;
  border-top: 1px solid #aab0bf;
}

.panel-tabs button {
  position: relative;
  z-index: 0;
  width: 19px;
  height: 14px;
  padding-left: 3px;
}

.panel-tabs button::before {
  content: "";
  position: absolute;
  z-index: -1;
  inset: 0;
  border: 1px solid #a2a8b8;
  border-bottom: 0;
  border-radius: 3px 6px 0 0;
  background: #d3d8ea;
}

.panel-tabs .active::before {
  background: #f8f8fb;
}

.panel-tabs button svg {
  width: 12px;
  height: 12px;
}

.panel-body {
  flex: 1;
  padding: 4px 4px 4px 2px;
  border: 1px solid #a2a8b8;
  background: #f6f6fa;
}

table {
  width: 100%;
  table-layout: fixed;
  border-collapse: collapse;
}

th {
  height: 13px;
  padding-left: 1px;
  background: #f2f2f6;
  font-weight: normal;
  text-align: left;
}

td {
  height: 12px;
  padding-left: 7px;
  border: 1px solid #e2e3e9;
  background: #fff;
  line-height: 10px;
  white-space: nowrap;
}

td + td {
  padding-left: 2px;
}

td input,
td select {
  display: block;
  width: 100%;
  height: 10px;
}

td button {
  display: block;
  width: 100%;
  height: 10px;
  border: 1px solid #b9b9bd;
  background: #e4e4e6;
  line-height: 8px;
}

.off {
  color: #888;
}

.off td + td {
  background: #e2e4ec;
}

.pick {
  display: flex;
}

.pick select {
  flex: 1;
  appearance: none;
}

.pick svg,
.pick button {
  flex: none;
  width: 10px;
  height: 10px;
  border: 1px solid #b9b9bd;
  background: #eee;
}

/* check boxes */
input[type="checkbox"] {
  appearance: none;
  position: relative;
  width: 8px;
  height: 8px;
  border: 1px solid #8a8a8a;
  background: #fff;
}

input[type="checkbox"]:checked::after {
  content: "";
  position: absolute;
  left: 2px;
  top: 0;
  width: 2px;
  height: 4px;
  border: solid #111;
  border-width: 0 1px 1px 0;
  transform: rotate(40deg);
}

input.dim {
  border-color: #b5b5b5;
  background: #eee;
}

.osnaps {
  display: flex;
  align-items: center;
  gap: 5px;
  height: 16px;
  margin: 2px 0 6px 3px;
  padding-left: 3px;
  border-left: 1px solid #b5b9c4;
  font: 6px/10px "Open Sans", sans-serif;
}

.osnaps label {
  display: flex;
  align-items: center;
  gap: 3px;
}

/* status bar */
.status {
  display: flex;
  height: 13px;
  border-top: 1px solid #c4c8d3;
  border-bottom: 1px solid #a2a8b8;
}

.status > * {
  padding: 0 3px;
  border-right: 1px solid #a8adba;
  line-height: 11px;
  white-space: nowrap;
  text-align: center;
}

.status .cplane {
  width: 30px;
}

.status .coord {
  width: 45px;
}

.status .layer {
  flex: 1;
  display: flex;
  align-items: center;
  gap: 2px;
}

.layer i {
  width: 8px;
  height: 8px;
  background: #000;
}

.status .on {
  background: #e4f3fc;
  font-weight: bold;
}

.status .cut {
  width: 5px;
  margin-right: 11px;
  padding: 0 1px;
  overflow: hidden;
}
```
